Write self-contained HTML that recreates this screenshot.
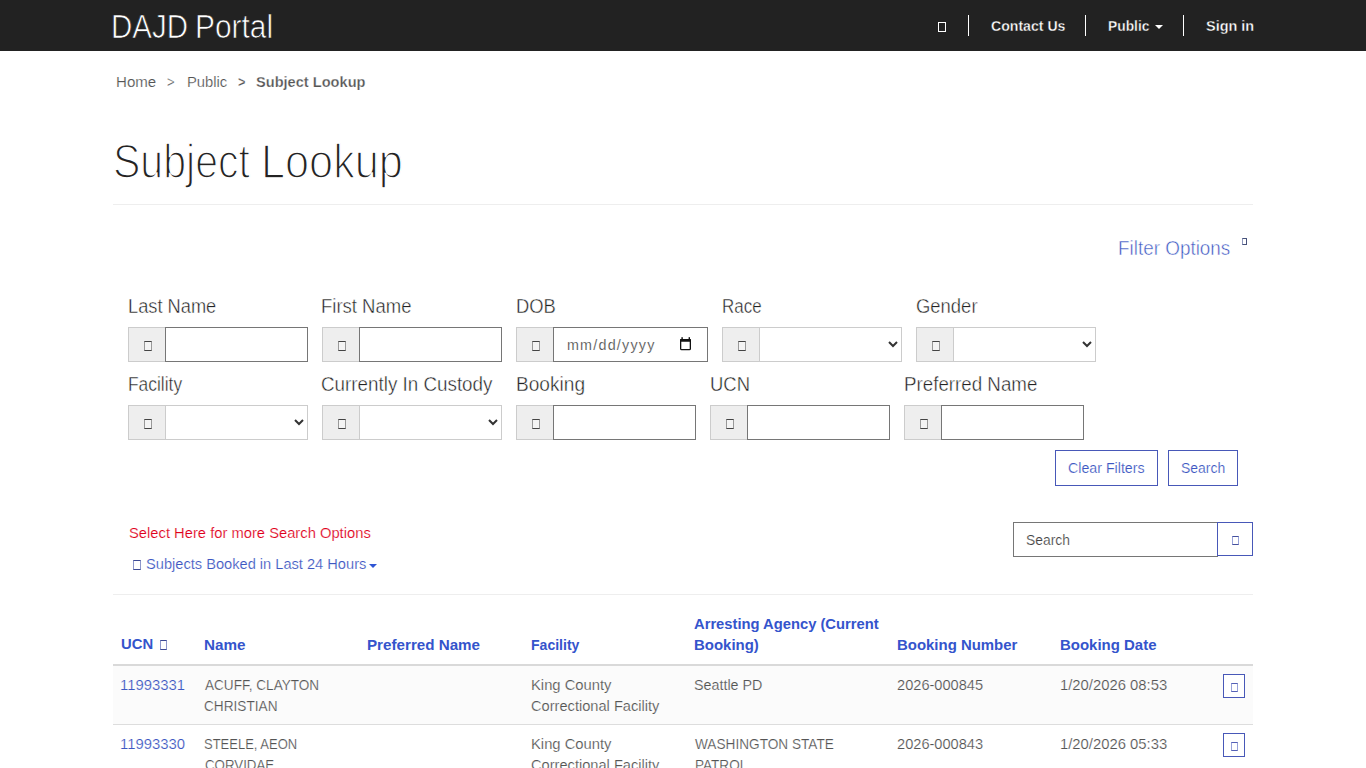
<!DOCTYPE html>
<html lang="en">
<head>
<meta charset="utf-8">
<title>Subject Lookup - DAJD Portal</title>
<style>
*{box-sizing:border-box}
html,body{margin:0;padding:0}
html{width:1366px;height:768px;overflow:hidden}
#page{position:absolute;left:0;top:0;width:1366px;height:768px;overflow:hidden;background:#fff}
body{width:1366px;height:768px;overflow:hidden;background:#fff;font-family:"Liberation Sans",sans-serif;font-size:15px;color:#555;position:relative}
.f{position:absolute;display:block;white-space:nowrap;line-height:1;transform-origin:0 0;margin:0;font-weight:normal;text-decoration:none}
.abs{position:absolute;display:block}
nav{position:absolute;left:0;top:0;width:1366px;height:51px;background:#222}
.vr{position:absolute;top:15px;width:1px;height:21px;background:#fff}
.tofu{position:absolute;display:block;border:1px solid #444;background:transparent}
.caret{position:absolute;display:block;width:0;height:0;border-left:4px solid transparent;border-right:4px solid transparent;border-top:4px solid #fff}
h1{margin:0;font-size:inherit;font-weight:normal}
hr{position:absolute;left:113px;width:1140px;height:1px;margin:0;border:0;background:#eee}
.grp{position:absolute;width:180px;height:35px}
.addon{position:absolute;left:0;top:0;width:38px;height:35px;background:#eee;border:1px solid #ccc}
.addon .tofu{left:15px;top:13px;width:8px;height:10px;border-color:#444 #999;background:#f4f4f4}
.grp input,.grp select{position:absolute;left:37px;top:0;width:143px;height:35px;margin:0;padding:6px 12px;border:1px solid #767676;border-radius:0;background:#fff;font-family:"Liberation Sans",sans-serif;font-size:15px;color:#333;outline:0}
.grp select{border-color:#ccc;padding:6px 8px}
.btn{position:absolute;display:block;background:#fff;border:1px solid #4858b8}
table{margin:0;width:1140px;border-collapse:collapse;table-layout:fixed}
th,td{padding:0;border:0;text-align:left}
thead tr{height:60px}
tbody tr{height:59px}
</style>
</head>
<body>
<div id="page">

<nav>
  <a class="brand"><span class="f" id="brand1" style="left:111.307px;top:10px;font-size:33px;color:#fff;transform:scaleX(0.894);-webkit-text-stroke:0.7px #222;">DAJD</span> <span class="f" id="brand2" style="left:195.061px;top:10px;font-size:33px;color:#fff;transform:scaleX(0.906);-webkit-text-stroke:0.7px #222;">Portal</span></a>
  <span class="tofu" style="left:938px;top:22px;width:8px;height:10px;border-color:#fff"></span>
  <span class="vr" style="left:968px"></span>
  <span class="f" id="nav1" style="left:990.56px;top:18px;font-size:15.3px;font-weight:bold;color:#fff;transform:scaleX(0.922);-webkit-text-stroke:0.35px #222;">Contact Us</span>
  <span class="vr" style="left:1085px"></span>
  <span class="f" id="nav2" style="left:1107.942px;top:18px;font-size:15.3px;font-weight:bold;color:#fff;transform:scaleX(0.902);-webkit-text-stroke:0.35px #222;">Public</span>
  <span class="caret" style="left:1155px;top:25px"></span>
  <span class="vr" style="left:1183px"></span>
  <span class="f" id="nav3" style="left:1206.092px;top:18px;font-size:15.3px;font-weight:bold;color:#fff;transform:scaleX(0.944);-webkit-text-stroke:0.35px #222;">Sign in</span>
</nav>

<div class="breadcrumb">
  <span class="f" id="bc1" style="left:116.088px;top:74px;font-size:15px;color:#555;transform:scaleX(1.006);-webkit-text-stroke:0.18px #fff;">Home</span><span class="f" id="bc1s" style="left:166.652px;top:74px;font-size:15px;color:#555;transform:scaleX(0.872);-webkit-text-stroke:0.18px #fff;">&gt;</span><span class="f" id="bc2" style="left:187.298px;top:74px;font-size:15px;color:#555;transform:scaleX(0.985);-webkit-text-stroke:0.18px #fff;">Public</span><span class="f" id="bc2s" style="left:238px;top:74px;font-size:15px;font-weight:bold;color:#555;transform:scaleX(0.844);-webkit-text-stroke:0.25px #fff;">&gt;</span><span class="f" id="bc3" style="left:255.605px;top:74px;font-size:15px;font-weight:bold;color:#555;transform:scaleX(0.973);-webkit-text-stroke:0.25px #fff;">Subject Lookup</span>
</div>

<h1><span class="f" id="h1a" style="left:112.875px;top:138px;font-size:48px;color:#232222;transform:scaleX(0.855);-webkit-text-stroke:1.6px #fff;">Subject</span> <span class="f" id="h1b" style="left:261.109px;top:138px;font-size:48px;color:#232222;transform:scaleX(0.901);-webkit-text-stroke:1.6px #fff;">Lookup</span></h1>
<hr style="top:204px">

<span class="f" id="fo" style="left:1118.357px;top:238px;font-size:20.8px;color:#3d57c2;transform:scaleX(0.908);-webkit-text-stroke:0.5px #fff;">Filter Options</span>
<span class="tofu" style="left:1242px;top:238px;width:5px;height:7px;border-color:#47527a #47527a #47527a #8f98bd"></span>

<form>
  <span class="f" id="l1" style="left:127.892px;top:296px;font-size:20.1px;color:#222;transform:scaleX(0.908);-webkit-text-stroke:0.42px #fff;">Last Name</span>
  <div class="grp" style="left:128px;top:327px"><span class="addon"><span class="tofu"></span></span><input type="text"></div>
  <span class="f" id="l2" style="left:321.052px;top:296px;font-size:20.1px;color:#222;transform:scaleX(0.921);-webkit-text-stroke:0.42px #fff;">First Name</span>
  <div class="grp" style="left:322px;top:327px"><span class="addon"><span class="tofu"></span></span><input type="text"></div>
  <span class="f" id="l3" style="left:515.563px;top:296px;font-size:20.1px;color:#222;transform:scaleX(0.916);-webkit-text-stroke:0.42px #fff;">DOB</span>
  <div class="grp" style="left:516px;top:327px;width:192px"><span class="addon"><span class="tofu"></span></span><input type="text" style="width:155px">
    <svg class="abs" style="left:163px;top:9px" width="14" height="16" viewBox="0 0 14 16"><rect x="1.65" y="3.65" width="9.7" height="10" rx="1" fill="none" stroke="#111" stroke-width="1.3"/><rect x="1" y="3" width="11" height="2.8" rx=".6" fill="#111"/><rect x="2.4" y="1.2" width="1.4" height="2.4" fill="#111"/><rect x="9.6" y="1.2" width="1.4" height="2.4" fill="#111"/></svg>
  </div>
  <span class="f" id="dob" style="left:566.973px;top:338px;font-size:14.3px;color:#484848;letter-spacing:1.23px;-webkit-text-stroke:0.18px #fff;">mm/dd/yyyy</span>
  <span class="f" id="l4" style="left:721.939px;top:296px;font-size:20.1px;color:#222;transform:scaleX(0.844);-webkit-text-stroke:0.42px #fff;">Race</span>
  <div class="grp" style="left:722px;top:327px"><span class="addon"><span class="tofu"></span></span><select><option></option></select></div>
  <span class="f" id="l5" style="left:915.682px;top:296px;font-size:20.1px;color:#222;transform:scaleX(0.918);-webkit-text-stroke:0.42px #fff;">Gender</span>
  <div class="grp" style="left:916px;top:327px"><span class="addon"><span class="tofu"></span></span><select><option></option></select></div>

  <span class="f" id="l6" style="left:127.935px;top:374px;font-size:20.1px;color:#222;transform:scaleX(0.865);-webkit-text-stroke:0.42px #fff;">Facility</span>
  <div class="grp" style="left:128px;top:405px"><span class="addon"><span class="tofu"></span></span><select><option></option></select></div>
  <span class="f" id="l7" style="left:321.064px;top:374px;font-size:20.1px;color:#222;transform:scaleX(0.936);-webkit-text-stroke:0.42px #fff;">Currently In Custody</span>
  <div class="grp" style="left:322px;top:405px"><span class="addon"><span class="tofu"></span></span><select><option></option></select></div>
  <span class="f" id="l8" style="left:516.049px;top:374px;font-size:20.1px;color:#222;transform:scaleX(0.951);-webkit-text-stroke:0.42px #fff;">Booking</span>
  <div class="grp" style="left:516px;top:405px"><span class="addon"><span class="tofu"></span></span><input type="text"></div>
  <span class="f" id="l9" style="left:710.247px;top:374px;font-size:20.1px;color:#222;transform:scaleX(0.918);-webkit-text-stroke:0.42px #fff;">UCN</span>
  <div class="grp" style="left:710px;top:405px"><span class="addon"><span class="tofu"></span></span><input type="text"></div>
  <span class="f" id="l10" style="left:903.967px;top:374px;font-size:20.1px;color:#222;transform:scaleX(0.933);-webkit-text-stroke:0.42px #fff;">Preferred Name</span>
  <div class="grp" style="left:904px;top:405px"><span class="addon"><span class="tofu"></span></span><input type="text"></div>

  <span class="btn" style="left:1055px;top:450px;width:103px;height:36px"></span><span class="f" id="b1" style="left:1068.3px;top:460px;font-size:15px;color:#3d57c2;transform:scaleX(0.947);-webkit-text-stroke:0.18px #fff;">Clear Filters</span>
  <span class="btn" style="left:1168px;top:450px;width:70px;height:36px"></span><span class="f" id="b2" style="left:1181.333px;top:460px;font-size:15px;color:#3d57c2;transform:scaleX(0.929);-webkit-text-stroke:0.18px #fff;">Search</span>
</form>

<span class="f" id="red" style="left:128.887px;top:525px;font-size:15px;color:#e0001a;transform:scaleX(0.983);-webkit-text-stroke:0.18px #fff;">Select Here for more Search Options</span>
<span class="tofu" style="left:133px;top:560px;width:8px;height:10px;border-color:#3d4a94 #8e97cc"></span>
<span class="f" id="sub" style="left:146.04px;top:556px;font-size:15px;color:#3d57c2;transform:scaleX(0.975);-webkit-text-stroke:0.18px #fff;">Subjects Booked in Last 24 Hours</span>
<span class="caret" style="left:369px;top:564px;border-top-color:#2f55d4"></span>

<div class="abs" style="left:1013px;top:522px;width:205px;height:35px;border:1px solid #767676;background:#fff"></div>
<span class="f" id="sph" style="left:1025.527px;top:532px;font-size:15px;color:#444;transform:scaleX(0.924);-webkit-text-stroke:0.18px #fff;">Search</span>
<div class="btn" style="left:1217px;top:522px;width:36px;height:34px"></div>
<span class="tofu" style="left:1232px;top:536px;width:7px;height:9px;border-color:#44509c #98a2da"></span>

<hr style="top:594px">

<div class="results" style="padding:605px 0 0 113px">
<table>
  <colgroup><col style="width:84px"><col style="width:163px"><col style="width:163px"><col style="width:163px"><col style="width:203px"><col style="width:163px"><col style="width:163px"><col style="width:38px"></colgroup>
  <thead>
    <tr style="border-bottom:2px solid #d9d9d9">
      <th><span class="f" id="th1" style="left:121.221px;top:636px;font-size:15px;font-weight:bold;color:#3454cc;transform:scaleX(0.988);">UCN</span><span class="tofu" style="left:160px;top:640px;width:7px;height:10px;border-color:#3d4a94 #8e97cc"></span></th>
      <th><span class="f" id="th2" style="left:204.183px;top:637px;font-size:15px;font-weight:bold;color:#3454cc;transform:scaleX(1.017);">Name</span></th><th><span class="f" id="th3" style="left:366.988px;top:637px;font-size:15px;font-weight:bold;color:#3454cc;transform:scaleX(1.012);">Preferred Name</span></th><th><span class="f" id="th4" style="left:530.743px;top:637px;font-size:15px;font-weight:bold;color:#3454cc;transform:scaleX(0.937);">Facility</span></th><th><span class="f" id="th5a" style="left:693.918px;top:616px;font-size:15px;font-weight:bold;color:#3454cc;transform:scaleX(0.983);">Arresting Agency (Current</span><span class="f" id="th5b" style="left:694.107px;top:637px;font-size:15px;font-weight:bold;color:#3454cc;transform:scaleX(0.997);">Booking)</span></th><th><span class="f" id="th6" style="left:896.874px;top:637px;font-size:15px;font-weight:bold;color:#3454cc;transform:scaleX(0.996);">Booking Number</span></th><th><span class="f" id="th7" style="left:1059.832px;top:637px;font-size:15px;font-weight:bold;color:#3454cc;transform:scaleX(0.998);">Booking Date</span></th><th></th>
    </tr>
  </thead>
  <tbody>
    <tr style="background:#fbfbfb;border-bottom:1px solid #ddd">
      <td><span class="f" id="r1c1" style="left:120.111px;top:677px;font-size:15px;color:#3d57c2;transform:scaleX(0.989);-webkit-text-stroke:0.18px #fbfbfb;">11993331</span></td><td><span class="f" id="r1c2a" style="left:204.799px;top:677px;font-size:15px;color:#555;transform:scaleX(0.905);-webkit-text-stroke:0.18px #fbfbfb;">ACUFF, CLAYTON</span><span class="f" id="r1c2b" style="left:203.755px;top:698px;font-size:15px;color:#555;transform:scaleX(0.909);-webkit-text-stroke:0.18px #fbfbfb;">CHRISTIAN</span></td><td></td><td><span class="f" id="r1c4a" style="left:530.692px;top:677px;font-size:15px;color:#555;transform:scaleX(0.985);-webkit-text-stroke:0.18px #fbfbfb;">King County</span><span class="f" id="r1c4b" style="left:531.12px;top:698px;font-size:15px;color:#555;transform:scaleX(0.975);-webkit-text-stroke:0.18px #fbfbfb;">Correctional Facility</span></td><td><span class="f" id="r1c5" style="left:694.162px;top:677px;font-size:15px;color:#555;transform:scaleX(0.954);-webkit-text-stroke:0.18px #fbfbfb;">Seattle PD</span></td><td><span class="f" id="r1c6" style="left:897.3px;top:677px;font-size:15px;color:#555;transform:scaleX(0.974);-webkit-text-stroke:0.18px #fbfbfb;">2026-000845</span></td><td><span class="f" id="r1c7" style="left:1059.793px;top:677px;font-size:15px;color:#555;transform:scaleX(0.988);-webkit-text-stroke:0.18px #fbfbfb;">1/20/2026 08:53</span></td>
      <td><span class="btn" style="left:1223px;top:674px;width:22px;height:24px"></span><span class="tofu" style="left:1231px;top:683px;width:7px;height:9px;border-color:#5560b5 #98a2da"></span></td>
    </tr>
    <tr>
      <td><span class="f" id="r2c1" style="left:120.111px;top:736px;font-size:15px;color:#3d57c2;transform:scaleX(0.989);-webkit-text-stroke:0.18px #fff;">11993330</span></td><td><span class="f" id="r2c2a" style="left:204.262px;top:736px;font-size:15px;color:#555;transform:scaleX(0.866);-webkit-text-stroke:0.18px #fff;">STEELE, AEON</span><span class="f" id="r2c2b" style="left:204.6px;top:757px;font-size:15px;color:#555;transform:scaleX(0.886);-webkit-text-stroke:0.18px #fff;">CORVIDAE</span></td><td></td><td><span class="f" id="r2c4a" style="left:530.699px;top:736px;font-size:15px;color:#555;transform:scaleX(0.985);-webkit-text-stroke:0.18px #fff;">King County</span><span class="f" id="r2c4b" style="left:531.12px;top:757px;font-size:15px;color:#555;transform:scaleX(0.975);-webkit-text-stroke:0.18px #fff;">Correctional Facility</span></td><td><span class="f" id="r2c5a" style="left:695.142px;top:736px;font-size:15px;color:#555;transform:scaleX(0.909);-webkit-text-stroke:0.18px #fff;">WASHINGTON STATE</span><span class="f" id="r2c5b" style="left:694.596px;top:757px;font-size:15px;color:#555;transform:scaleX(0.904);-webkit-text-stroke:0.18px #fff;">PATROL</span></td><td><span class="f" id="r2c6" style="left:897.3px;top:736px;font-size:15px;color:#555;transform:scaleX(0.974);-webkit-text-stroke:0.18px #fff;">2026-000843</span></td><td><span class="f" id="r2c7" style="left:1059.789px;top:736px;font-size:15px;color:#555;transform:scaleX(0.988);-webkit-text-stroke:0.18px #fff;">1/20/2026 05:33</span></td>
      <td><span class="btn" style="left:1223px;top:733px;width:22px;height:24px"></span><span class="tofu" style="left:1231px;top:742px;width:7px;height:9px;border-color:#5560b5 #98a2da"></span></td>
    </tr>
  </tbody>
</table>
</div>

</div>
</body>
</html>
